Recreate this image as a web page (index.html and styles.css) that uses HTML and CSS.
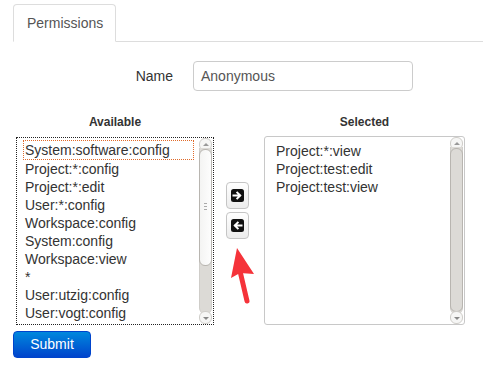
FILE: index.html
```html
<!DOCTYPE html>
<html>
<head>
<meta charset="utf-8">
<link rel="stylesheet" href="styles.css">
</head>
<body>
<div class="page">
  <div class="tabs">
    <div class="tab">Permissions</div>
  </div>
  <div class="name-row">
    <label class="name-label">Name</label>
    <div class="name-input">Anonymous</div>
  </div>
  <div class="lists">
    <div class="col col-left">
      <div class="col-title">Available</div>
      <div class="listbox focused">
        <div class="items">
          <div class="item active">System:software:config</div>
          <div class="item">Project:*:config</div>
          <div class="item">Project:*:edit</div>
          <div class="item">User:*:config</div>
          <div class="item">Workspace:config</div>
          <div class="item">System:config</div>
          <div class="item">Workspace:view</div>
          <div class="item">*</div>
          <div class="item">User:utzig:config</div>
          <div class="item">User:vogt:config</div>
        </div>
        <div class="sbar">
          <div class="sb-arrow up"></div>
          <div class="sb-track">
            <div class="sb-thumb short"><span class="grip"></span></div>
          </div>
          <div class="sb-arrow down"></div>
        </div>
      </div>
    </div>
    <div class="mid">
      <div class="mbtn">
        <svg width="13" height="13" viewBox="0 0 13 13"><rect x="0" y="0" width="13" height="13" rx="2.5" fill="#111"/><path d="M2.5 6.5 H9 M6.3 3.6 L9.2 6.5 L6.3 9.4" stroke="#fff" stroke-width="2" fill="none" stroke-linecap="square"/></svg>
      </div>
      <div class="mbtn">
        <svg width="13" height="13" viewBox="0 0 13 13"><rect x="0" y="0" width="13" height="13" rx="2.5" fill="#111"/><path d="M10.5 6.5 H4 M6.7 3.6 L3.8 6.5 L6.7 9.4" stroke="#fff" stroke-width="2" fill="none" stroke-linecap="square"/></svg>
      </div>
    </div>
    <div class="col col-right">
      <div class="col-title">Selected</div>
      <div class="listbox">
        <div class="items">
          <div class="item">Project:*:view</div>
          <div class="item">Project:test:edit</div>
          <div class="item">Project:test:view</div>
        </div>
        <div class="sbar">
          <div class="sb-arrow up"></div>
          <div class="sb-track">
            <div class="sb-thumb full"></div>
          </div>
          <div class="sb-arrow down"></div>
        </div>
      </div>
    </div>
  </div>
  <button class="submit">Submit</button>
  <svg class="red-arrow" width="30" height="64" viewBox="0 0 30 64">
    <path d="M20 56 L13 26" stroke="#f5333a" stroke-width="5" stroke-linecap="round" fill="none"/>
    <path d="M10 3 L4 33 L13 28 L27 29 Z" fill="#f5333a"/>
  </svg>
</div>
</body>
</html>
```

FILE: styles.css
```css
* { box-sizing: border-box; }
html, body { margin: 0; padding: 0; background: #fff; }
body { font-family: "Liberation Sans", Arial, sans-serif; font-size: 14px; color: #333; }
.page { position: relative; width: 483px; height: 369px; padding-top: 4px; }

.tabs { margin-left: 13px; border-bottom: 1px solid #ddd; height: 38px; display: flex; }
.tab {
  width: 103px; height: 38px; border: 1px solid #ddd; border-bottom-color: #fff;
  border-radius: 4px 4px 0 0; color: #555; padding-top: 9px; padding-left: 13px;
  background: #fff; margin-bottom: -1px; line-height: 18px;
}

.name-row { display: flex; align-items: center; margin-top: 19px; height: 30px; }
.name-label { width: 174px; text-align: right; padding-right: 1px; color: #333; }
.name-input {
  margin-left: 19px; width: 220px; height: 30px; border: 1px solid #ccc; border-radius: 4px;
  padding: 5px 7px; line-height: 18px; color: #555;
}

.lists { display: flex; margin-top: 24px; height: 213px; }
.col { display: flex; flex-direction: column; }
.col-left { margin-left: 16px; width: 198px; }
.col-right { width: 201px; }
.col-title { font-weight: bold; font-size: 12px; text-align: center; height: 21px; line-height: 14px; color: #333; }
.listbox { display: flex; height: 189px; border: 1px solid #c8c8c8; border-radius: 3px; background: #fff; }
.listbox.focused { border: 1px dotted #222; border-radius: 0; height: 188px; margin-top: 1px; }
.items { flex: 1; padding: 3px 0 0 6px; overflow: hidden; }
.col-right .items { padding: 5px 0 0 9px; }
.item { line-height: 18px; height: 18px; color: #333; white-space: nowrap; padding-left: 2px; }
.item.active { outline: 1px dotted #e06a2a; outline-offset: -1px; margin-right: 5px; height: 20px; line-height: 20px; margin-top: -1px; }
.sbar { width: 13px; display: flex; flex-direction: column; margin: 0 1px 0 0; }
.sb-arrow { height: 13px; position: relative; background: #f6f6f5; border: 1px solid #cfcdc9; border-radius: 6px; }
.sb-arrow::after { content: ""; position: absolute; left: 3px; border-left: 3px solid transparent; border-right: 3px solid transparent; }
.sb-arrow.up::after { top: 4px; border-bottom: 3px solid #999; }
.sb-arrow.down::after { top: 5px; border-top: 3px solid #888; }
.sb-track { flex: 1; background: #dcdad6; border-left: 1px solid #cfcdc9; border-right: 1px solid #cfcdc9; position: relative; margin: -3px 0; border-radius: 0 0 6px 6px; }
.sb-thumb { position: absolute; left: -1px; right: -1px; top: 1px; border: 1px solid #b8b5b0; border-radius: 6px; background: linear-gradient(to right, #f4f4f3, #fdfdfd); }
.sb-thumb.short { height: 117px; }
.sb-thumb.full { bottom: 2px; background: #dcdad6; }
.grip { position: absolute; left: 4px; top: 53px; width: 3px; height: 7px; border-top: 1px solid #aaa; border-bottom: 1px solid #aaa; }
.grip::after { content: ""; position: absolute; left: 0; top: 2px; width: 3px; height: 1px; background: #aaa; }

.mid { width: 50px; display: flex; flex-direction: column; align-items: center; padding-top: 67px; padding-right: 4px; gap: 3px; }
.mbtn {
  width: 23px; height: 27px; border: 1px solid #c5c5c5; border-radius: 4px;
  background: linear-gradient(#fff, #ececec); display: flex; align-items: center; justify-content: center;
}
.mbtn svg { display: block; }

.submit {
  display: block; margin: 3px 0 0 13px; width: 78px; height: 27px; border: 1px solid #0044cc;
  border-radius: 4px; background: linear-gradient(#0088dd, #0044cc); color: #fff;
  font-family: "Liberation Sans", Arial, sans-serif; font-size: 14px; padding: 0; line-height: 25px;
}
.red-arrow { position: absolute; left: 227px; top: 245px; }
```
